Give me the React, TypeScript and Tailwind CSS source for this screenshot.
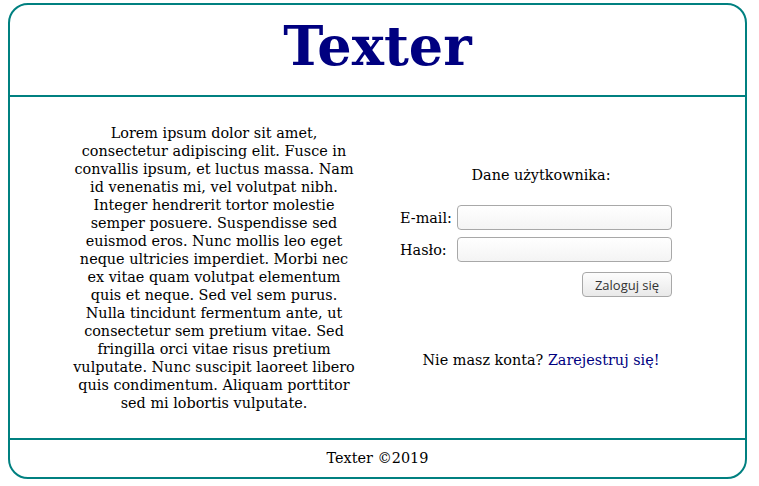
import React from "react";

const lorem =
  "Lorem ipsum dolor sit amet, consectetur adipiscing elit. Fusce in convallis ipsum, et luctus massa. Nam id venenatis mi, vel volutpat nibh. Integer hendrerit tortor molestie semper posuere. Suspendisse sed euismod eros. Nunc mollis leo eget neque ultricies imperdiet. Morbi nec ex vitae quam volutpat elementum quis et neque. Sed vel sem purus. Nulla tincidunt fermentum ante, ut consectetur sem pretium vitae. Sed fringilla orci vitae risus pretium vulputate. Nunc suscipit laoreet libero quis condimentum. Aliquam porttitor sed mi lobortis vulputate.";

export default function App() {
  return (
    <div
      className="w-[759px] h-[486px] bg-white pt-[3px] pl-[8px]"
      style={{ fontFamily: '"DejaVu Serif", serif' }}
    >
      <div className="w-[739px] h-[476px] border-2 border-[#008080] rounded-[20px] flex flex-col overflow-hidden text-black">
        <header className="h-[92px] shrink-0 border-b-2 border-[#008080] flex items-center justify-center pb-[8px]">
          <h1 className="text-[54px] font-bold text-[#000080] leading-none">Texter</h1>
        </header>
        <main className="flex-1 flex items-center text-[14.4px] leading-[18px]">
          <p className="ml-[63px] w-[282px] text-center">{lorem}</p>
          <div className="ml-[45px] w-[282px] flex flex-col">
            <div className="text-center">Dane użytkownika:</div>
            <div className="mt-[21px] flex items-center h-[25px]">
              <span className="w-[57px]">E-mail:</span>
              <input
                type="text"
                className="w-[215px] h-[25px] border border-[#a8a8a8] rounded-[4px] bg-gradient-to-b from-[#ffffff] to-[#f4f4f4] outline-none"
              />
            </div>
            <div className="mt-[7px] flex items-center h-[25px]">
              <span className="w-[57px]">Hasło:</span>
              <input
                type="password"
                className="w-[215px] h-[25px] border border-[#a8a8a8] rounded-[4px] bg-gradient-to-b from-[#ffffff] to-[#f4f4f4] outline-none"
              />
            </div>
            <div className="mt-[10px] w-[272px] flex justify-end">
              <button
                className="w-[90px] h-[25px] border border-[#a8a8a8] rounded-[4px] bg-gradient-to-b from-[#fdfdfd] to-[#e9e9e9] text-[13px] text-[#333333]"
                style={{ fontFamily: '"Open Sans", "DejaVu Sans", sans-serif' }}
              >
                Zaloguj się
              </button>
            </div>
            <div className="mt-[54px] text-center">
              Nie masz konta? <a className="text-[#000080]">Zarejestruj się!</a>
            </div>
          </div>
        </main>
        <footer className="h-[39px] shrink-0 border-t-2 border-[#008080] flex items-center justify-center text-[14.4px]">
          Texter ©2019
        </footer>
      </div>
    </div>
  );
}
